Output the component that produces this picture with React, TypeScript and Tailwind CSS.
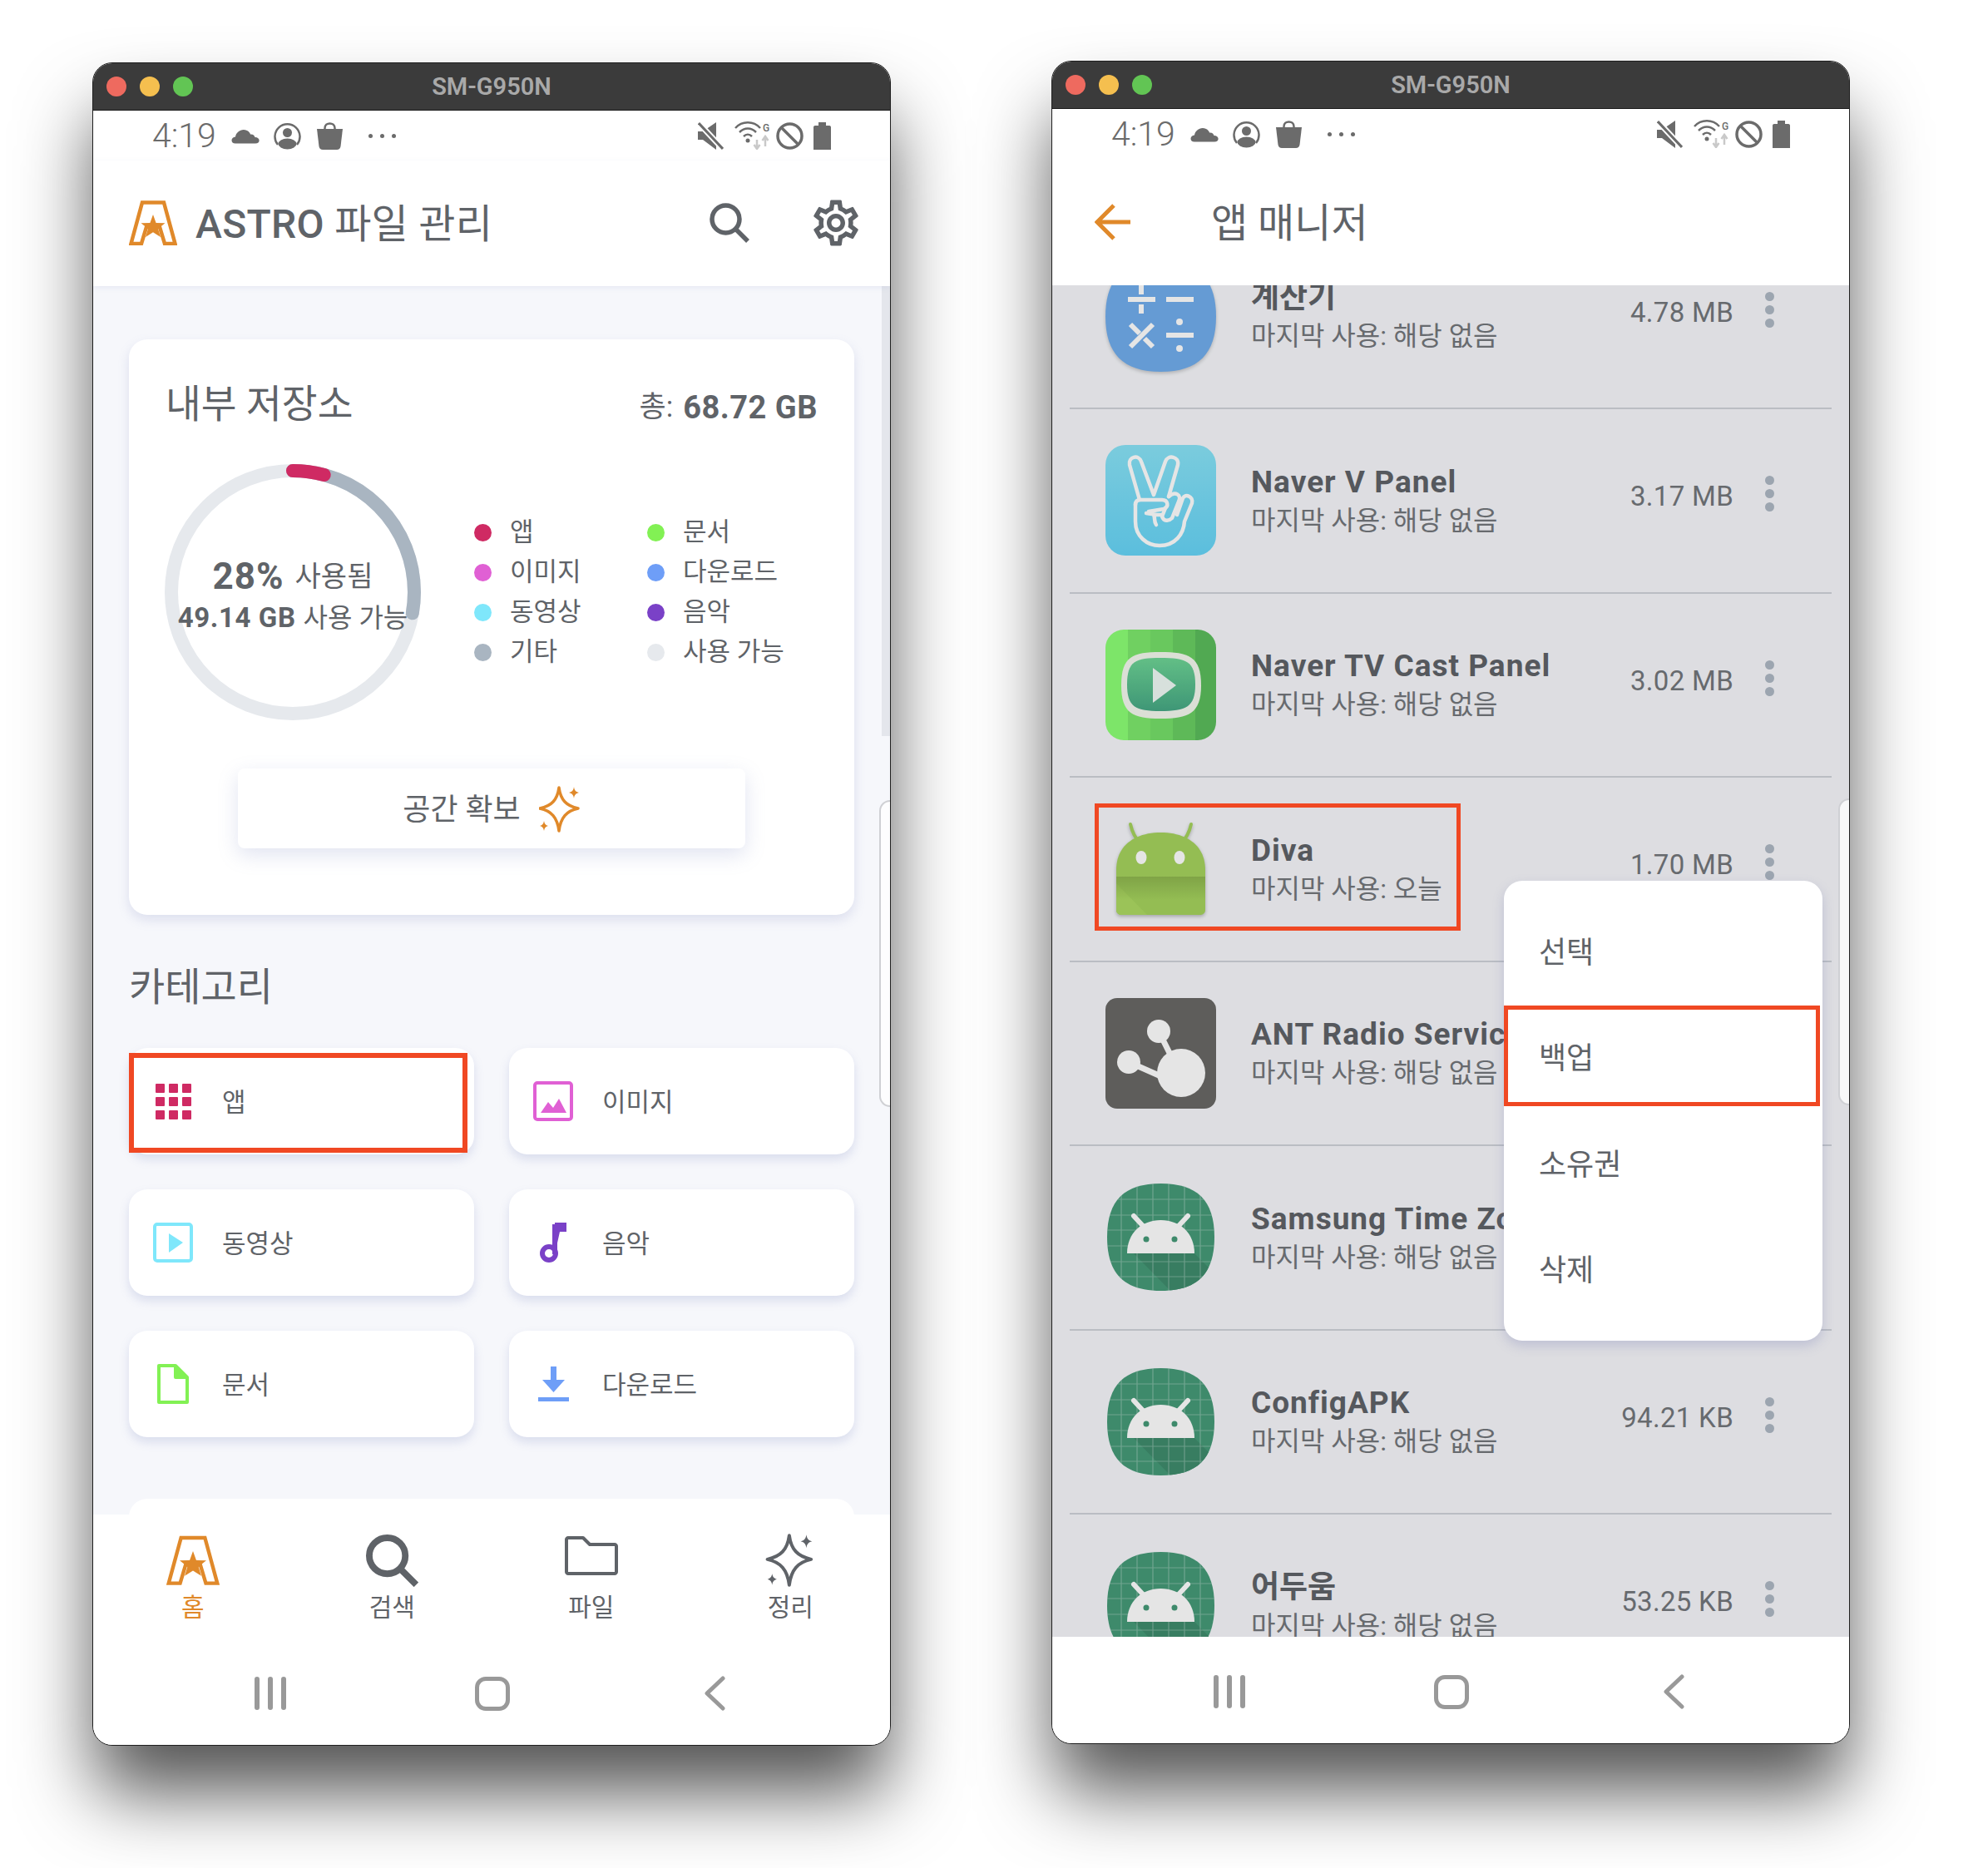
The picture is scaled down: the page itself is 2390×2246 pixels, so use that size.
import { MdOutlineSettings } from 'react-icons/md'

const orange = '#e0892a'

const rows = [
  { id: 'calc', name: '계산기', last: '해당 없음', size: '4.78 MB' },
  { id: 'vpanel', name: 'Naver V Panel', last: '해당 없음', size: '3.17 MB', latin: true },
  { id: 'tv', name: 'Naver TV Cast Panel', last: '해당 없음', size: '3.02 MB', latin: true },
  { id: 'diva', name: 'Diva', last: '오늘', size: '1.70 MB', latin: true },
  { id: 'ant', name: 'ANT Radio Service', last: '해당 없음', size: '', latin: true },
  { id: 'android', name: 'Samsung Time Zone Data', last: '해당 없음', size: '', latin: true },
  { id: 'android', name: 'ConfigAPK', last: '해당 없음', size: '94.21 KB', latin: true },
  { id: 'android', name: '어두움', last: '해당 없음', size: '53.25 KB' },
]

const legend = [
  ['앱', 'bg-[#cf2a63]'],
  ['문서', 'bg-[#82f154]'],
  ['이미지', 'bg-[#e060d4]'],
  ['다운로드', 'bg-[#6e9ef7]'],
  ['동영상', 'bg-[#7fe7fb]'],
  ['음악', 'bg-[#7a41c7]'],
  ['기타', 'bg-[#a9b5c1]'],
  ['사용 가능', 'bg-[#e6e9ed]'],
]

function Logo({ w, h, sw = 4.5 }: { w: number; h: number; sw?: number }) {
  return (
    <svg width={w} height={h} viewBox="0 0 58 54" fill="none">
      <path d="M2.5 52 L16 2.5 H42 L55.5 52 H43 L37 32 H21 L15 52 Z" stroke={orange} strokeWidth={sw} strokeLinejoin="miter" />
      <path d="M29 17 L32.600 27 L43.500 27.300 L35 34 L38 44 L29 38.300 L20 44 L23 34 L14.500 27.300 L25.400 27 Z" fill={orange} />
    </svg>
  )
}

function Sparkle({ w, h, color, sw = 3.5 }: { w: number; h: number; color: string; sw?: number }) {
  return (
    <svg width={w} height={h} viewBox="0 0 50 56" fill="none">
      <path d="M24 2 C26 17 33 24 47 27 C33 30 26 38 24 54 C22 38 15 30 1 27 C15 24 22 17 24 2 Z" stroke={color} strokeWidth={sw} strokeLinejoin="round" />
      <path d="M42 1 C42.600 5 44 7 48 8 C44 9 42.600 11 42 15 C41.400 11 40 9 36 8 C40 7 41.400 5 42 1 Z" fill={color} />
      <path d="M6 42 C6.500 45.500 8 47 11 48 C8 49 6.500 50.500 6 54 C5.500 50.500 4 49 1 48 C4 47 5.500 45.500 6 42 Z" fill={color} />
    </svg>
  )
}

function SearchIcon({ size, sw }: { size: number; sw: number }) {
  return (
    <svg width={size} height={size} viewBox="0 0 48 48" fill="none" stroke="#5f6368" strokeWidth={sw}>
      <circle cx="19.500" cy="19.500" r="16.500" />
      <path d="M31 31 L46 46" strokeLinecap="butt" />
    </svg>
  )
}

function StatusBar() {
  return (
    <div className="h-[60px] flex items-center justify-between pl-[71px] pr-[71px] bg-white text-[#6b6b6b]">
      <div className="flex items-center">
        <span className="text-[41px] font-light leading-none w-[95px] text-[#6b6b6b]">4:19</span>
        <svg width="34" height="19" viewBox="0 0 34 19" fill="#6b6b6b" className="mr-[17px]">
          <path d="M5 18.500 C-1 18.500 -1 11 5 10.500 C6 4 13 0 19 3 C21 4 22.500 5.500 23 7.500 C26 7 28 9 28.500 11 C35 11 35.500 18.500 29 18.500 Z" />
        </svg>
        <svg width="33" height="33" viewBox="0 0 33 33" fill="none" className="mr-[19px]">
          <path d="M5 27 A15 15 0 1 1 28 27" stroke="#6b6b6b" strokeWidth="2.500" />
          <circle cx="16.500" cy="12.500" r="5.500" fill="#6b6b6b" />
          <ellipse cx="16.500" cy="26" rx="11" ry="6.500" fill="#6b6b6b" />
        </svg>
        <svg width="31" height="33" viewBox="0 0 31 33" fill="none" className="mr-[31px]">
          <path d="M0 8 H31 L28.500 29 C28 31.500 26.500 33 24 33 H7 C4.500 33 3 31.500 2.500 29 Z" fill="#6b6b6b" />
          <path d="M9.500 12 V7 C9.500 -0.500 21.500 -0.500 21.500 7 V12" stroke="#6b6b6b" strokeWidth="2.500" />
        </svg>
        <div className="flex gap-[9px]">
          <span className="w-[5px] h-[5px] rounded-full bg-[#6b6b6b]" />
          <span className="w-[5px] h-[5px] rounded-full bg-[#6b6b6b]" />
          <span className="w-[5px] h-[5px] rounded-full bg-[#6b6b6b]" />
        </div>
      </div>
      <div className="flex items-center">
        <svg width="31" height="33" viewBox="0 0 31 33" fill="#6b6b6b" className="mr-[13px]">
          <path d="M0 11 H6 L22 0 V33 L6 21 H0 Z" />
          <path d="M1 1 L30 32" stroke="#fff" strokeWidth="7" />
          <path d="M1 1 L30 32" stroke="#6b6b6b" strokeWidth="3" />
        </svg>
        <svg width="45" height="34" viewBox="0 0 45 34" fill="none" className="mr-[5px]">
          <path d="M1 8 C9 -1 23 -1 31 8" stroke="#6b6b6b" strokeWidth="2.500" />
          <path d="M6 13 C12 7 20 7 26 13" stroke="#6b6b6b" strokeWidth="2.500" />
          <path d="M11 18 C14 15 18 15 21 18" stroke="#6b6b6b" strokeWidth="2.500" />
          <circle cx="16" cy="23" r="2.500" fill="#6b6b6b" />
          <text x="34" y="12" fontSize="12" fontFamily="Roboto" fontWeight="500" fill="#6b6b6b">G</text>
          <path d="M27 22 V33 M23.500 28 L27 33 L30.500 28" stroke="#c9c9c9" strokeWidth="2.500" />
          <path d="M37 30 V18 M33.500 23 L37 18 L40.500 23" stroke="#c9c9c9" strokeWidth="2.500" />
        </svg>
        <svg width="33" height="33" viewBox="0 0 33 33" fill="none" stroke="#6b6b6b" strokeWidth="3.500" className="mr-[12px]">
          <circle cx="16.500" cy="16.500" r="14.500" />
          <path d="M6 6 L27 27" />
        </svg>
        <svg width="21" height="33" viewBox="0 0 21 33" fill="#6b6b6b">
          <path d="M6 0 H15 V4 H19 C20.500 4 21 5 21 6 V33 H0 V6 C0 5 0.500 4 2 4 H6 Z" />
        </svg>
      </div>
    </div>
  )
}

function SystemNav() {
  return (
    <div className="h-[128px] pt-[4px] pl-[2px] bg-white rounded-b-[21px] flex items-center justify-center shrink-0">
      <div className="w-[267px] flex justify-center gap-[10px]">
        <span className="w-[6px] h-[40px] rounded-full bg-[#999999]" />
        <span className="w-[6px] h-[40px] rounded-full bg-[#999999]" />
        <span className="w-[6px] h-[40px] rounded-full bg-[#999999]" />
      </div>
      <div className="w-[267px] flex justify-center">
        <span className="w-[42px] h-[41px] rounded-[13px] border-[5px] border-[#999999]" />
      </div>
      <div className="w-[267px] flex justify-center">
        <svg width="26" height="42" viewBox="0 0 26 42" fill="none" stroke="#999999" strokeWidth="5" strokeLinecap="round" strokeLinejoin="round">
          <path d="M23 3 L4 21 L23 39" />
        </svg>
      </div>
    </div>
  )
}

function EdgeHandle() {
  return <div className="absolute right-0 top-[886px] w-[13px] h-[369px] rounded-l-[14px] border-l-2 border-y-2 border-[#cfd0d4] bg-white/80 z-30" />
}

function Window({ children, className }: { children: React.ReactNode; className?: string }) {
  return (
    <div className={'relative w-[960px] h-[2024px] rounded-[24px] border border-[#1f1f1f] bg-white shadow-[0_60px_90px_-4px_rgba(0,0,0,0.68)] flex flex-col overflow-hidden ' + (className ?? '')}>
      <div className="relative h-[57px] shrink-0 bg-[#3b3b3b] border-b border-[#1a1a1a] flex items-center justify-center">
        <div className="absolute left-[16px] top-[16px] flex gap-[16px]">
          <span className="w-[24px] h-[24px] rounded-full bg-[#ee6a5f]" />
          <span className="w-[24px] h-[24px] rounded-full bg-[#f5bf4f]" />
          <span className="w-[24px] h-[24px] rounded-full bg-[#62c554]" />
        </div>
        <span className="text-[29px] font-semibold text-[#a9a9a9] leading-none">SM-G950N</span>
      </div>
      <StatusBar />
      {children}
      <EdgeHandle />
    </div>
  )
}

function CategoryCard({ label, icon, marked }: { label: string; icon: React.ReactNode; marked?: boolean }) {
  return (
    <div className="relative h-[128px] rounded-[22px] bg-white shadow-[0_6px_12px_rgba(120,130,190,0.22)] flex items-center pl-[29px]">
      <div className="w-[48px] h-[48px] flex items-center justify-center">{icon}</div>
      <span className="ml-[35px] mt-[5px] text-[31px] text-[#5f6368]">{label}</span>
      {marked && <div className="absolute left-0 top-[6px] w-[407px] h-[120px] border-[6px] border-[#f04823]" />}
    </div>
  )
}

function Ring() {
  return (
    <div className="relative w-[308px] h-[308px] shrink-0">
      <svg width="308" height="308" viewBox="0 0 308 308" fill="none">
        <circle cx="154" cy="154" r="146" stroke="#e6e9ed" strokeWidth="16" />
        <circle cx="154" cy="154" r="146" stroke="#a9b5c1" strokeWidth="16" strokeLinecap="round" pathLength={360} strokeDasharray="100 260" transform="rotate(-90 154 154)" />
        <circle cx="154" cy="154" r="146" stroke="#cf2a63" strokeWidth="16" strokeLinecap="round" pathLength={360} strokeDasharray="15 345" transform="rotate(-90 154 154)" />
      </svg>
      <div className="absolute inset-0 flex flex-col items-center text-[#5f6368] whitespace-nowrap">
        <div className="mt-[107px] h-[56px] flex items-center gap-[13px]">
          <span className="text-[44px] font-bold tracking-[1px]">28%</span>
          <span className="text-[34px]">사용됨</span>
        </div>
        <div className="mt-[-3px] h-[50px] flex items-center gap-[9px]">
          <span className="text-[33px] font-bold tracking-[0.6px]">49.14 GB</span>
          <span className="text-[32px]">사용 가능</span>
        </div>
      </div>
    </div>
  )
}

function HomeScreen() {
  return (
    <>
      <div className="relative z-10 h-[151px] shrink-0 bg-white flex items-center pl-[43px] pr-[32px] shadow-[0_2px_6px_rgba(120,130,190,0.12)]">
        <div className="-mt-[2px]"><Logo w={58} h={54} /></div>
        <span className="ml-[22px] mt-[3px] text-[48px] text-[#5f6368] flex-1 tracking-[0.3px]"><span className="font-medium">ASTRO</span> 파일 관리</span>
        <div className="-mt-[1px] mr-[71px]"><SearchIcon size={48} sw={5.500} /></div>
        <div className="-mt-[1px]"><MdOutlineSettings size={66} color="#5f6368" /></div>
      </div>
      <div className="relative flex-1 bg-[#f6f7fb] overflow-hidden px-[43px] pt-[64px]">
        <div className="absolute right-0 top-0 w-[10px] h-[541px] bg-[#e4e6ec]" />
        <div className="relative h-[692px] rounded-[22px] bg-white shadow-[0_6px_14px_rgba(120,130,190,0.2)]">
          <div className="flex items-center justify-between pl-[44px] pr-[44px] pt-[53px] h-[103px] text-[#5f6368]">
            <span className="text-[46.500px] leading-[50px]">내부 저장소</span>
            <div className="flex items-center gap-[12px] mt-[8px]">
              <span className="text-[35px]">총:</span>
              <span className="text-[38px] font-bold tracking-[0.5px]">68.72 GB</span>
            </div>
          </div>
          <div className="flex items-center pl-[43px] mt-[47px]">
            <Ring />
            <div className="ml-[64px] grid grid-cols-[208px_1fr] auto-rows-[48px]">
              {legend.map(([label, dot]) => (
                <div key={label} className="flex items-center">
                  <span className={'w-[21px] h-[21px] rounded-full ' + dot} />
                  <span className="ml-[22px] text-[31px] text-[#5f6368] whitespace-nowrap">{label}</span>
                </div>
              ))}
            </div>
          </div>
          <div className="mx-auto mt-[58px] w-[610px] h-[96px] rounded-[8px] bg-white shadow-[0_8px_24px_rgba(120,130,190,0.22)] flex items-center justify-center gap-[22px]">
            <span className="text-[36px] text-[#5f6368] mt-[3px]">공간 확보</span>
            <div className="mt-[2px]"><Sparkle w={50} h={56} color={orange} /></div>
          </div>
        </div>
        <h2 className="mt-[57px] text-[47px] leading-[60px] font-normal text-[#5f6368]">카테고리</h2>
        <div className="mt-[43px] grid grid-cols-2 gap-x-[42px] gap-y-[42px]">
          <CategoryCard
            label="앱"
            marked
            icon={
              <svg width="43" height="43" viewBox="0 0 43 43" fill="#cf2a63">
                {[0, 16, 32].map((y) => [0, 16, 32].map((x) => <rect key={x + '-' + y} x={x} y={y} width="11" height="11" rx="1" />))}
              </svg>
            }
          />
          <CategoryCard
            label="이미지"
            icon={
              <svg width="48" height="48" viewBox="0 0 48 48" fill="none">
                <rect x="2" y="2" width="44" height="44" rx="3" stroke="#e060d4" strokeWidth="4" />
                <path d="M9 38 L18 25 L24 32 L31 21 L40 38 Z" fill="#e060d4" />
              </svg>
            }
          />
          <CategoryCard
            label="동영상"
            icon={
              <svg width="48" height="48" viewBox="0 0 48 48" fill="none">
                <rect x="2" y="2" width="44" height="44" rx="3" stroke="#7fe7fb" strokeWidth="4" />
                <path d="M19 13 L36 24 L19 36 Z" fill="#7fe7fb" />
              </svg>
            }
          />
          <CategoryCard
            label="음악"
            icon={
              <svg width="32" height="48" viewBox="0 0 32 48" fill="none">
                <circle cx="11" cy="37" r="8" stroke="#7a41c7" strokeWidth="6" />
                <path d="M18 38 V0 H32 V11 H24" fill="#7a41c7" />
                <path d="M18 2 V38" stroke="#7a41c7" strokeWidth="6" />
              </svg>
            }
          />
          <CategoryCard
            label="문서"
            icon={
              <svg width="38" height="48" viewBox="0 0 38 48" fill="none" stroke="#82f154" strokeWidth="4" strokeLinejoin="round">
                <path d="M2 2 H22 L36 16 V46 H2 Z" />
                <path d="M22 2 V16 H36" fill="#82f154" />
              </svg>
            }
          />
          <CategoryCard
            label="다운로드"
            icon={
              <svg width="37" height="42" viewBox="0 0 37 42" fill="#6e9ef7">
                <path d="M15 0 H22 V16 H32 L18.500 31 L5 16 H15 Z" />
                <rect x="0" y="37" width="37" height="5" />
              </svg>
            }
          />
        </div>
        <div className="mt-[74px] h-[60px] rounded-[22px] bg-white" />
      </div>
      <div className="relative z-10 h-[149px] shrink-0 bg-white grid grid-cols-4 pt-[24px]">
        <div className="flex flex-col items-center">
          <div className="h-[62px] flex items-center"><Logo w={64} h={60} sw={4} /></div>
          <span className="mt-[6px] text-[30px] leading-[40px] text-[#e0892a]">홈</span>
        </div>
        <div className="flex flex-col items-center">
          <div className="h-[62px] flex items-center"><SearchIcon size={63} sw={6} /></div>
          <span className="mt-[6px] text-[30px] leading-[40px] text-[#5f6368]">검색</span>
        </div>
        <div className="flex flex-col items-center">
          <div className="h-[62px] flex items-center -mt-[6px] mb-[6px]">
            <svg width="64" height="47" viewBox="0 0 64 47" fill="none" stroke="#5f6368" strokeWidth="4" strokeLinejoin="round">
              <path d="M2 4 C2 3 3 2 4 2 H22 L30 10 H60 C61 10 62 11 62 12 V43 C62 44 61 45 60 45 H4 C3 45 2 44 2 43 Z" />
            </svg>
          </div>
          <span className="mt-[6px] text-[30px] leading-[40px] text-[#5f6368]">파일</span>
        </div>
        <div className="flex flex-col items-center">
          <div className="h-[62px] flex items-center"><Sparkle w={60} h={64} color="#5f6368" /></div>
          <span className="mt-[6px] text-[30px] leading-[40px] text-[#5f6368]">정리</span>
        </div>
      </div>
      <SystemNav />
    </>
  )
}

const squircle = 'M66.500 0 C112 0 133 22 133 66.500 C133 111 112 133 66.500 133 C21 133 0 111 0 66.500 C0 22 21 0 66.500 0 Z'
const android = 'M66.500 2 C110 2 131 22 131 66.500 C131 111 110 131 66.500 131 C23 131 2 111 2 66.500 C2 22 23 2 66.500 2 Z'

function AppIcon({ id }: { id: string }) {
  if (id === 'calc') {
    return (
      <svg width="133" height="133" viewBox="0 0 133 133" className="drop-shadow-[0_2px_2px_rgba(0,0,0,0.2)]">
        <path d={squircle} fill="#71adec" />
        <g fill="none" stroke="#ffffff" strokeWidth="6">
          <path d="M27 46 H60 M43 24 V40 M43 52 V63 M73 46 H106 M73 89 H106" />
          <path d="M30 103 L57 76 M30 76 L41 87 M47 93 L57 103" />
        </g>
        <circle cx="89" cy="73" r="4" fill="#fff" />
        <circle cx="89" cy="105" r="4" fill="#fff" />
      </svg>
    )
  }
  if (id === 'vpanel') {
    return (
      <svg width="133" height="133" viewBox="0 0 133 133" fill="none">
        <defs>
          <linearGradient id="vp" x1="0" y1="0" x2="0" y2="1">
            <stop offset="0" stopColor="#89e3f7" />
            <stop offset="1" stopColor="#66d4f7" />
          </linearGradient>
        </defs>
        <rect width="133" height="133" rx="24" fill="url(#vp)" />
        <g stroke="#fff" strokeWidth="4.500" strokeLinecap="round" strokeLinejoin="round">
          <path d="M41 66 L29 24 C27 14 40 11 43 20 L58 60 L72 20 C75 11 89 14 87 24 L76 62" />
          <path d="M36 72 C36 68 38 66 42 66 H68 C75 66 77 74 70 77 L52 80" />
          <path d="M36 70 V92 C36 110 50 121 65 121 C84 121 94 107 95 92 L104 70 C106 62 96 58 93 64 L86 84" />
          <path d="M76 62 C84 55 92 60 88 68 L80 88 C76 92 70 92 68 86 L72 76" />
          <path d="M49 82 L62 84 M58 84 C60 88 58 92 61 96 M68 84 L62 84" />
        </g>
      </svg>
    )
  }
  if (id === 'tv') {
    return (
      <svg width="133" height="133" viewBox="0 0 133 133">
        <defs>
          <clipPath id="tvc"><rect width="133" height="133" rx="22" /></clipPath>
          <linearGradient id="tvg" x1="0" y1="0" x2="0" y2="1">
            <stop offset="0" stopColor="#6ed596" />
            <stop offset="1" stopColor="#46a884" />
          </linearGradient>
        </defs>
        <g clipPath="url(#tvc)">
          <rect x="0" width="27" height="133" fill="#8cff75" />
          <rect x="27" width="27" height="133" fill="#7de86c" />
          <rect x="54" width="27" height="133" fill="#75df69" />
          <rect x="81" width="27" height="133" fill="#69ce62" />
          <rect x="108" width="25" height="133" fill="#5bbd5c" />
        </g>
        <path d="M66 27 C100 27 115 32 115 67 C115 101 100 107 66 107 C33 107 19 101 19 67 C19 32 33 27 66 27 Z" fill="#f4f9ef" />
        <path d="M66 34 C97 34 108 38 108 66 C108 93 97 98 66 98 C36 98 26 93 26 66 C26 38 36 34 66 34 Z" fill="url(#tvg)" />
        <path d="M57 46 L85 67 L57 88 Z" fill="#f0faf5" />
      </svg>
    )
  }
  if (id === 'diva') {
    return (
      <svg width="133" height="133" viewBox="0 0 133 133" fill="none" className="drop-shadow-[0_2px_2px_rgba(0,0,0,0.25)]">
        <defs>
          <linearGradient id="dv" x1="0" y1="0" x2="0" y2="1">
            <stop offset="0" stopColor="#7c9f44" stopOpacity="0.55" />
            <stop offset="1" stopColor="#7c9f44" stopOpacity="0" />
          </linearGradient>
        </defs>
        <path d="M30 13 C32 22 36 30 42 36 M103 13 C101 22 97 30 91 36" stroke="#a5d35d" strokeWidth="4" strokeLinecap="round" />
        <path d="M13 76 V68 C13 38 36 23 66.500 23 C97 23 120 38 120 68 V76 Z" fill="#a5d35d" />
        <path d="M13 76 H120 V116 C120 120 117 122 113 122 H20 C16 122 13 120 13 116 Z" fill="#a5d35d" />
        <path d="M13 84 L50 122 H20 C16 122 13 120 13 116 Z" fill="#adda62" />
        <rect x="13" y="76" width="107" height="28" fill="url(#dv)" />
        <ellipse cx="43" cy="53" rx="6.500" ry="8" fill="#fff" />
        <ellipse cx="89" cy="53" rx="6.500" ry="8" fill="#fff" />
      </svg>
    )
  }
  if (id === 'ant') {
    return (
      <svg width="133" height="133" viewBox="0 0 133 133" fill="#fff">
        <rect width="133" height="133" rx="14" fill="#696866" />
        <circle cx="64" cy="40" r="14" />
        <circle cx="28" cy="77" r="14" />
        <circle cx="91" cy="90" r="29" />
        <path d="M64 40 L84 80 M28 77 L80 100" stroke="#fff" strokeWidth="7" />
      </svg>
    )
  }
  return (
    <svg width="133" height="133" viewBox="0 0 133 133" fill="none">
      <defs>
        <clipPath id="sq"><path d={android} /></clipPath>
      </defs>
      <g clipPath="url(#sq)">
        <rect width="133" height="133" fill="#469a78" />
        <path d="M34 86 H107 L133 112 V133 H80 Z" fill="#3f8c6d" />
        <path d="M19 0 V133 M38 0 V133 M57 0 V133 M76 0 V133 M95 0 V133 M114 0 V133 M0 21 H133 M0 40 H133 M0 58 H133 M0 77 H133 M0 96 H133 M0 114 H133" stroke="#ffffff" strokeOpacity="0.3" strokeWidth="1.200" />
      </g>
      <path d="M34 41 L46 54 M99 41 L87 54" stroke="#fff" strokeWidth="6" strokeLinecap="round" />
      <path d="M26 86 C26 62 43 46 66.500 46 C90 46 107 62 107 86 Z" fill="#fff" />
      <circle cx="49" cy="69" r="3.500" fill="#469a78" />
      <circle cx="83" cy="69" r="3.500" fill="#469a78" />
    </svg>
  )
}

function AppRow({ row, first }: { row: (typeof rows)[number]; first?: boolean }) {
  return (
    <div className={'h-[221.5px] shrink-0 flex items-center pl-[43px] pr-[69px] border-b-2 border-[#d0d3da] ' + (first ? '-mt-[72.5px]' : '')}>
      <AppIcon id={row.id} />
      <div className="ml-[42px] flex-1 min-w-0">
        <div className={'pt-[2px] text-[37px] leading-[46px] font-bold text-[#5f6368] whitespace-nowrap ' + (row.latin ? 'tracking-[1px]' : '')}>{row.name}</div>
        <div className="text-[32px] leading-[46px] text-[#73767b] whitespace-nowrap">마지막 사용: {row.last}</div>
      </div>
      <span className="text-[33px] tracking-[0.3px] text-[#73767b] pb-[10px]">{row.size}</span>
      <div className="ml-[38px] w-[11px] flex flex-col gap-[5px] pb-[16px]">
        <span className="w-[11px] h-[11px] rounded-full bg-[#aeb8c4]" />
        <span className="w-[11px] h-[11px] rounded-full bg-[#aeb8c4]" />
        <span className="w-[11px] h-[11px] rounded-full bg-[#aeb8c4]" />
      </div>
    </div>
  )
}

function ManagerScreen() {
  return (
    <>
      <div className="relative z-20 h-[152px] shrink-0 bg-white flex items-center pl-[51px]">
        <svg width="43" height="44" viewBox="0 0 43 44" fill="none" stroke={orange} strokeWidth="5" className="-mt-[1px]">
          <path d="M23 2 L3 22 L23 42 M3 22 H43" />
        </svg>
        <span className="ml-[97px] mt-[3px] text-[48px] text-[#5f6368]">앱 매니저</span>
      </div>
      <div className="relative flex-1 overflow-hidden bg-[#f6f7fb]">
        <div className="mx-[21px] flex flex-col">
          {rows.map((r, i) => <AppRow key={r.name} row={r} first={i === 0} />)}
        </div>
        <div className="absolute inset-0 bg-black/10" />
        <div className="absolute left-[51px] top-[623px] w-[440px] h-[153px] border-[5px] border-[#f04823]" />
        <div className="absolute left-[543px] top-[716px] w-[383px] h-[553px] py-[22px] rounded-[22px] bg-white shadow-[0_6px_14px_rgba(110,120,180,0.28)] text-[36px] text-[#5f6368]">
          <div className="h-[127.5px] flex items-center pl-[42px] pt-[2px]">선택</div>
          <div className="relative h-[127.5px] flex items-center pl-[42px] pt-[2px]">
            백업
            <div className="absolute left-0 top-0 w-[380px] h-[121px] border-[5px] border-[#f04823]" />
          </div>
          <div className="h-[127.5px] flex items-center pl-[42px] pt-[2px]">소유권</div>
          <div className="h-[127.5px] flex items-center pl-[42px] pt-[2px]">삭제</div>
        </div>
      </div>
      <SystemNav />
    </>
  )
}

export default function App() {
  return (
    <div className="w-[2390px] h-[2246px] overflow-hidden bg-white flex items-start pl-[111px] pt-[75px] gap-[193px] font-['Roboto','Noto_Sans_CJK_KR',sans-serif]">
      <Window>
        <HomeScreen />
      </Window>
      <Window className="-mt-[2px]">
        <ManagerScreen />
      </Window>
    </div>
  )
}
